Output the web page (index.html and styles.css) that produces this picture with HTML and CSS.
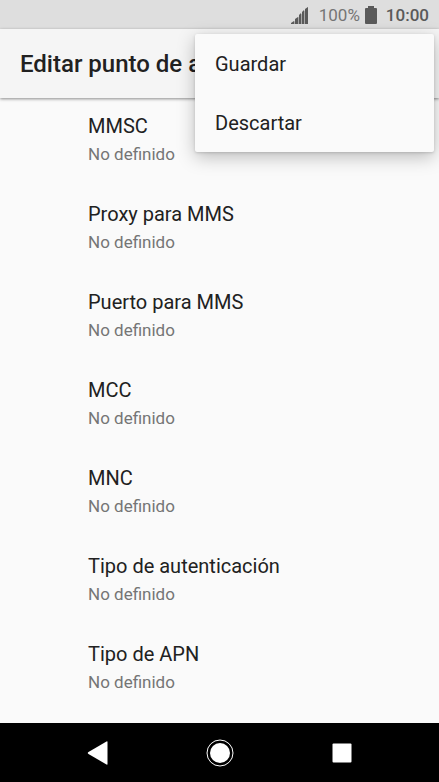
FILE: index.html
```html
<!DOCTYPE html>
<html lang="es">
<head>
    <meta charset="UTF-8">
    <meta name="viewport" content="width=device-width, initial-scale=1.0">
    <title>Editar punto de acceso</title>
    <link rel="stylesheet" href="styles.css">
</head>
<body>
    <div class="status-bar">
        <svg class="signal" viewBox="0 0 18 18" width="18" height="18" aria-hidden="true">
            <path class="wedge" d="M1 18L17 1V18Z"/>
            <path d="M0 18V17L3 15V18ZM4 18V13L7 11V18ZM8 18V9L10 7V18ZM11 18V6L13 4V18ZM14 18V3L17 1V18Z"/>
        </svg>
        <span class="battery-level">100%</span>
        <svg class="battery" viewBox="0 0 12 18" width="12" height="18" aria-hidden="true">
            <path d="M3 0H9V2H11Q12 2 12 3V17Q12 18 11 18H1Q0 18 0 17V3Q0 2 1 2H3Z"/>
        </svg>
        <span class="clock">10:00</span>
    </div>

    <header class="app-bar">
        <h1 class="title">Editar punto de a</h1>
        <div class="menu" role="menu">
            <button class="menu-item" role="menuitem">Guardar</button>
            <button class="menu-item" role="menuitem">Descartar</button>
        </div>
    </header>

    <main class="settings">
        <button class="setting"><span class="name">MMSC</span><span class="value">No definido</span></button>
        <button class="setting"><span class="name">Proxy para MMS</span><span class="value">No definido</span></button>
        <button class="setting"><span class="name">Puerto para MMS</span><span class="value">No definido</span></button>
        <button class="setting"><span class="name">MCC</span><span class="value">No definido</span></button>
        <button class="setting"><span class="name">MNC</span><span class="value">No definido</span></button>
        <button class="setting"><span class="name">Tipo de autenticación</span><span class="value">No definido</span></button>
        <button class="setting"><span class="name">Tipo de APN</span><span class="value">No definido</span></button>
    </main>

    <nav class="nav-bar">
        <button class="nav-button" aria-label="Atrás">
            <svg viewBox="0 0 28 28" width="28" height="28"><path d="M22.5 2.5Q23.500 2 23.500 3V25Q23.500 26 22.500 25.500L4.500 15Q3 14 4.500 13Z"/></svg>
        </button>
        <button class="nav-button" aria-label="Inicio">
            <svg viewBox="0 0 28 28" width="28" height="28">
                <circle class="ring" cx="14" cy="14" r="13"/>
                <circle cx="14" cy="14" r="10"/>
            </svg>
        </button>
        <button class="nav-button" aria-label="Recientes">
            <svg viewBox="0 0 28 28" width="28" height="28"><rect x="4.5" y="4.5" width="19" height="19" rx="1"/></svg>
        </button>
    </nav>
</body>
</html>
```
FILE: styles.css
```css
* {
    box-sizing: border-box;
}

body {
    margin: 0;
    min-height: 100vh;
    display: flex;
    flex-direction: column;
    background: #fafafa;
    color: #212121;
    font-family: Roboto, sans-serif;
}

button {
    border: none;
    background: none;
    padding: 0;
    font: inherit;
    color: inherit;
    text-align: left;
    cursor: pointer;
}

.status-bar {
    height: 29px;
    padding: 0 10px;
    display: flex;
    align-items: center;
    justify-content: flex-end;
    background: #dedede;
    color: #757575;
    font-size: 17px;
    line-height: 20px;
}

.signal {
    fill: #5a5a5a;
    margin-right: 10px;
}

.signal .wedge {
    fill: #a8a8a8;
}

.battery {
    fill: #5a5a5a;
    margin: 0 9px 0 5px;
}

.clock {
    color: #5a5a5a;
    font-weight: 500;
}

.app-bar {
    position: relative;
    height: 69px;
    padding: 0 244px 0 20px;
    display: flex;
    align-items: center;
    background: #f5f5f5;
    box-shadow: 0 1px 3px rgba(0, 0, 0, 0.45);
}

.title {
    margin: 0;
    font-size: 24px;
    line-height: 32px;
    font-weight: 500;
    white-space: nowrap;
    overflow: hidden;
}

/* open overflow menu */
.menu {
    position: absolute;
    top: 5px;
    right: 5px;
    width: 239px;
    display: flex;
    flex-direction: column;
    background: #fafafa;
    border-radius: 2px;
    box-shadow: 0 5px 18px rgba(0, 0, 0, 0.25), 0 1px 3px rgba(0, 0, 0, 0.15);
}

.menu-item {
    height: 59px;
    padding: 0 20px;
    font-size: 20px;
}

.settings {
    flex: 1;
    display: flex;
    flex-direction: column;
}

.setting {
    height: 88px;
    padding: 14px 20px 18px 88px;
    display: flex;
    flex-direction: column;
}

.name {
    font-size: 20px;
    line-height: 28px;
}

.value {
    color: #757575;
    font-size: 17px;
    line-height: 28px;
}

.nav-bar {
    height: 59px;
    display: flex;
    justify-content: center;
    background: #000;
}

.nav-button {
    width: 122px;
    display: flex;
    align-items: center;
    justify-content: center;
}

.nav-button svg {
    fill: #fff;
}

.nav-button .ring {
    fill: none;
    stroke: #fff;
    stroke-width: 1;
}
```
